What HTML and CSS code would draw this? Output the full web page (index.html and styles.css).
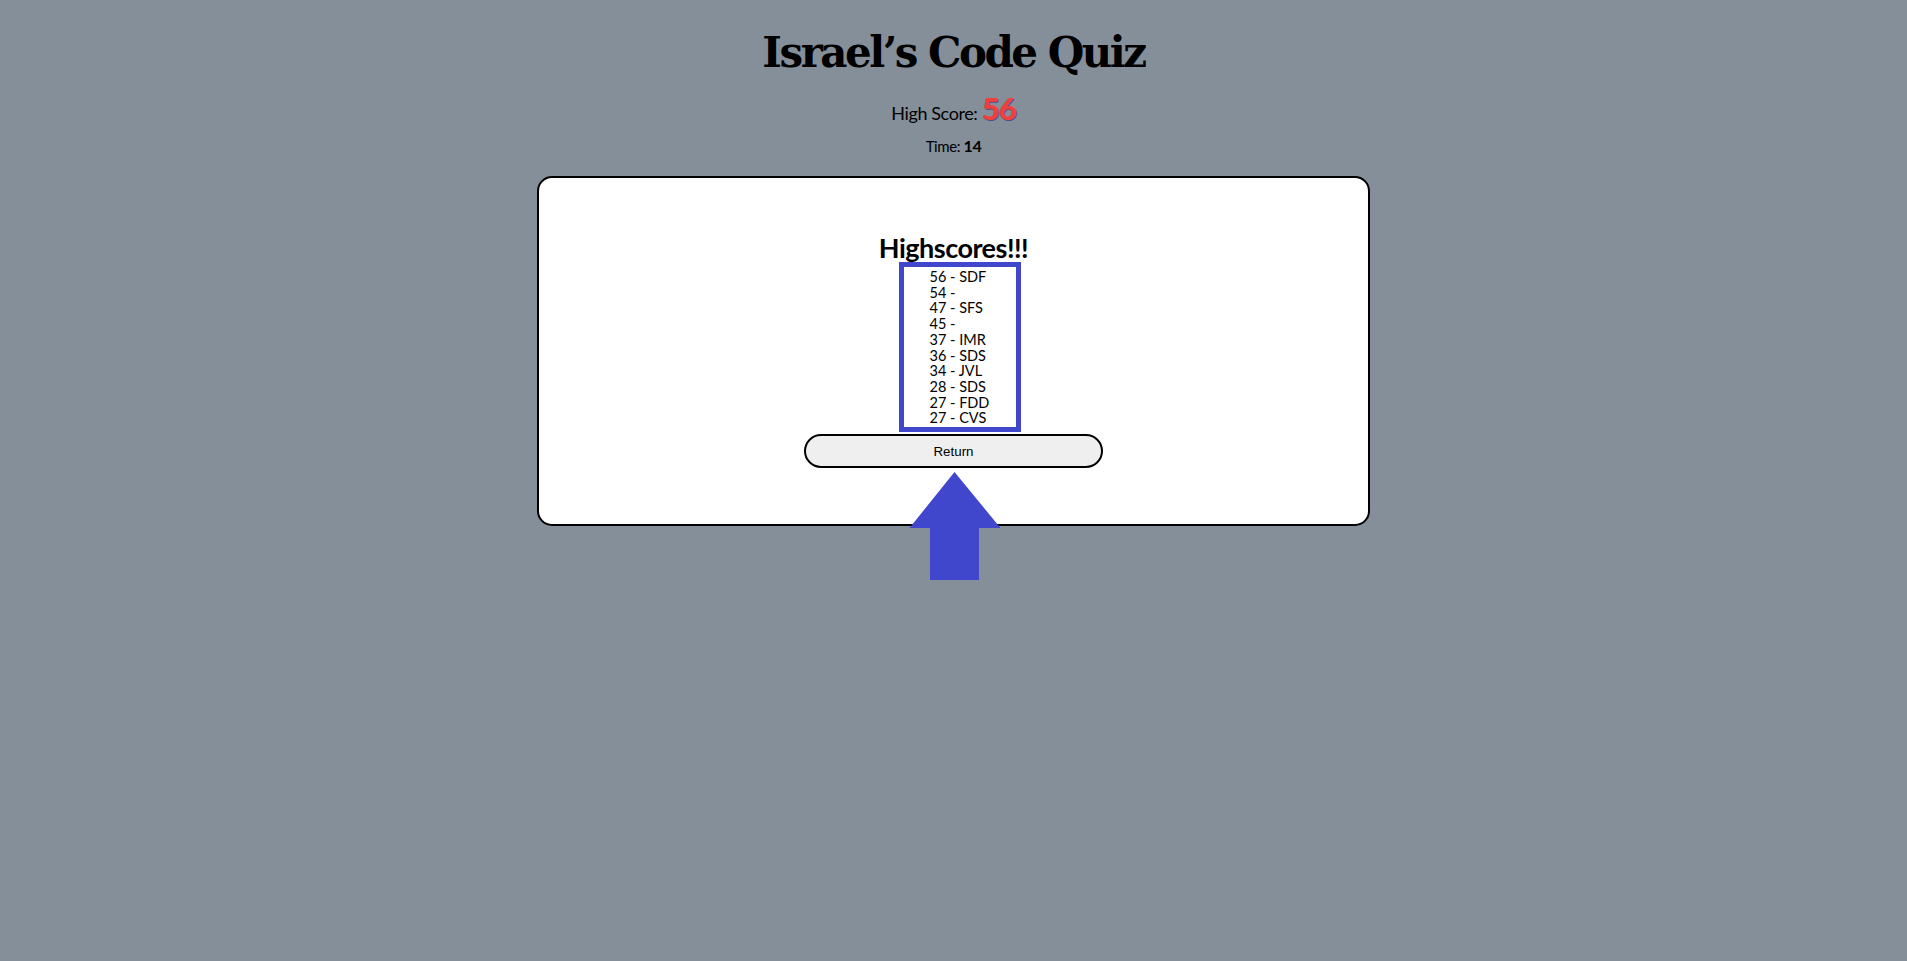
FILE: index.html
```html
<!DOCTYPE html>
<html lang="en">
<head>
<meta charset="utf-8">
<title>Israel's Code Quiz</title>
<link rel="stylesheet" href="styles.css">
</head>
<body>
<header class="top">
  <h1 class="title">Israel’s Code Quiz</h1>
  <p class="high">High Score: <span class="high-num">56</span></p>
  <p class="time">Time: <span class="time-num">14</span></p>
</header>
<main class="card">
  <h2 class="hs-title">Highscores!!!</h2>
  <ul class="hs-list">
    <li>56 - SDF</li>
    <li>54 - </li>
    <li>47 - SFS</li>
    <li>45 - </li>
    <li>37 - IMR</li>
    <li>36 - SDS</li>
    <li>34 - JVL</li>
    <li>28 - SDS</li>
    <li>27 - FDD</li>
    <li>27 - CVS</li>
  </ul>
  <button class="return" type="button">Return</button>
  <div class="arrow-slot">
    <svg class="arrow" width="92" height="108" viewBox="0 0 92 108" aria-hidden="true">
      <polygon points="45.5,0 0.5,56 21,56 21,108 70,108 70,56 91.5,56" fill="#4047cc"/>
    </svg>
  </div>
</main>
</body>
</html>
```
FILE: styles.css
```css
html, body {
  margin: 0;
  padding: 0;
}
html {
  height: 100%;
}
body {
  min-height: 100%;
  background: #858f9a;
  color: #000;
  font-family: Lato, "Open Sans", sans-serif;
}
.top {
  display: flex;
  flex-direction: column;
  align-items: center;
  padding-top: 25px;
}
.title {
  margin: 0;
  font-family: "DejaVu Serif", "Liberation Serif", serif;
  font-weight: bold;
  font-size: 42px;
  line-height: 56px;
  letter-spacing: -2.5px;
}
.high {
  margin: 12px 0 0;
  font-size: 18px;
  line-height: 30px;
  letter-spacing: -0.4px;
}
.high-num {
  color: #f0403a;
  font-weight: 900;
  font-size: 31px;
  letter-spacing: -1px;
  text-shadow: 1px 1px 0 #5a4a8a;
}
.time {
  margin: 8px 0 0;
  font-size: 15px;
  line-height: 20px;
  letter-spacing: -0.4px;
}
.time-num {
  font-weight: bold;
  font-size: 16px;
}
.card {
  position: relative;
  box-sizing: border-box;
  width: 833px;
  margin: 20px auto 0;
  background: #fff;
  border: 2px solid #000;
  border-radius: 15px;
  padding-top: 56px;
  display: flex;
  flex-direction: column;
  align-items: center;
}
.card > * {
  flex-shrink: 0;
}
.hs-title {
  margin: 0;
  font-size: 27px;
  line-height: 28px;
  font-weight: bold;
  letter-spacing: -0.5px;
}
.hs-list {
  box-sizing: border-box;
  width: 122px;
  height: 170px;
  margin: 0 0 0 12px;
  padding: 2px 0 0 26px;
  list-style: none;
  border: 5px solid #4047cc;
  font-size: 14.5px;
  line-height: 15.7px;
  overflow: hidden;
}
.hs-list li {
  white-space: pre;
}
.return {
  box-sizing: border-box;
  width: 299px;
  height: 34px;
  margin-top: 2px;
  background: #efefef;
  border: 2px solid #000;
  border-radius: 17px;
  font-family: Arial, "Liberation Sans", sans-serif;
  font-size: 13.33px;
  color: #000;
  padding: 0;
}
.arrow-slot {
  position: relative;
  z-index: 1;
  width: 92px;
  height: 52px;
  margin-top: 4px;
  margin-left: 2px;
}
.arrow {
  display: block;
  width: 92px;
  height: 108px;
  overflow: visible;
}
```
